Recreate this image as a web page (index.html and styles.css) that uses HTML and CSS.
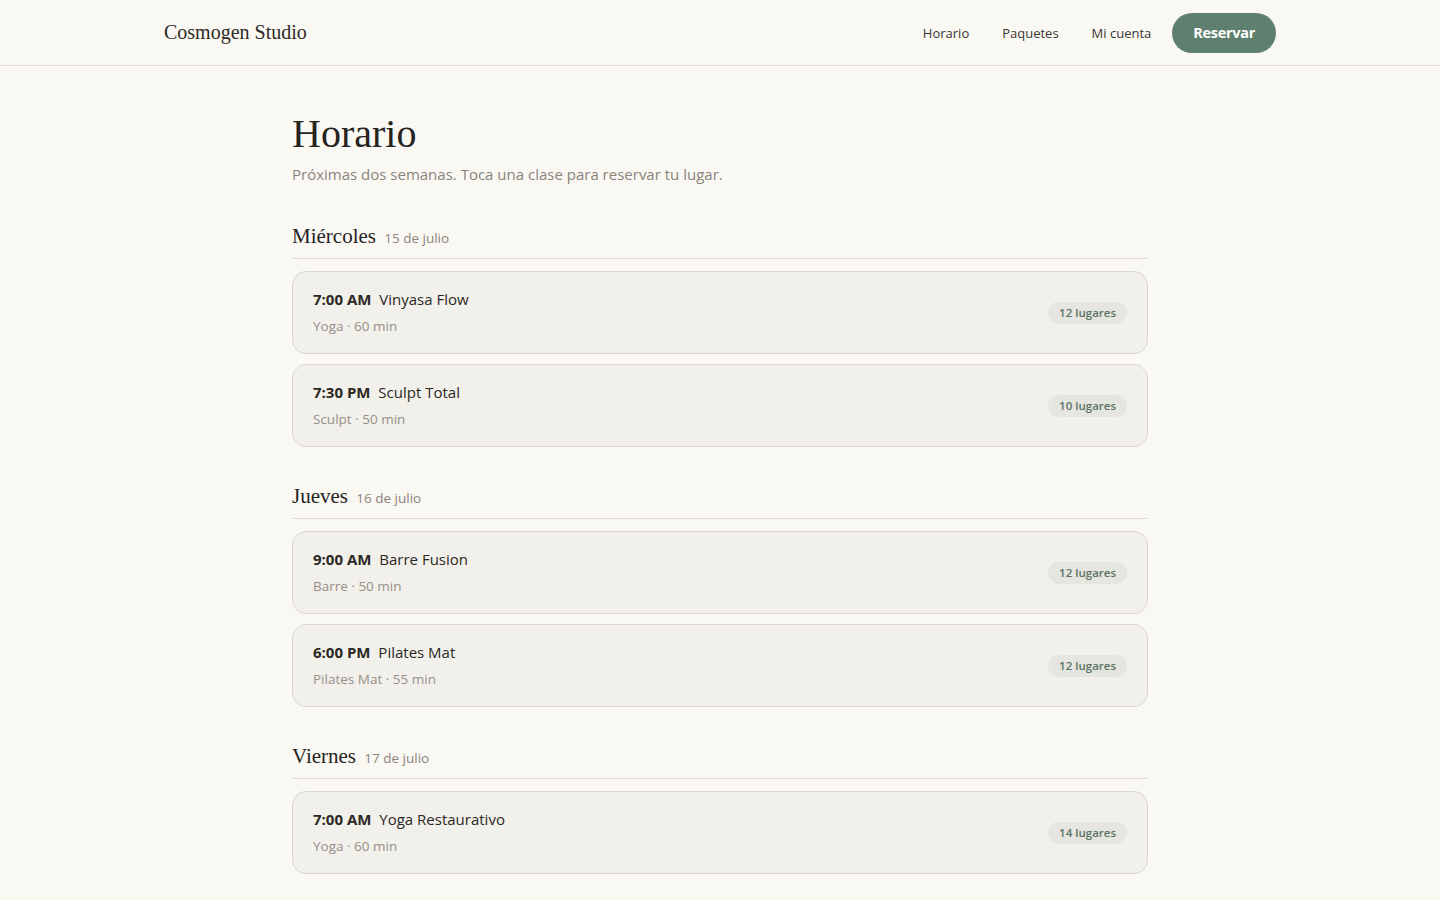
FILE: index.html
```html
<!DOCTYPE html>
<html lang="es">
<head>
  <meta charset="UTF-8">
  <meta name="viewport" content="width=device-width, initial-scale=1.0">
  <title>Horario · Cosmogen Studio</title>
  <link rel="stylesheet" href="styles.css">
</head>
<body>

<header class="topbar">
  <div class="topbar-inner">
    <a class="brand" href="#">Cosmogen Studio</a>
    <nav class="nav">
      <a href="#">Horario</a>
      <a href="#">Paquetes</a>
      <a href="#">Mi cuenta</a>
      <a class="btn-book" href="#">Reservar</a>
    </nav>
  </div>
</header>

<main class="page">
  <h1 class="title">Horario</h1>
  <p class="lead">Próximas dos semanas. Toca una clase para reservar tu lugar.</p>

  <section class="day">
    <h2 class="day-head">Miércoles <span>15 de julio</span></h2>
    <div class="class-card">
      <div>
        <div class="class-name"><b>7:00 AM</b> Vinyasa Flow</div>
        <div class="class-meta">Yoga · 60 min</div>
      </div>
      <span class="spots">12 lugares</span>
    </div>
    <div class="class-card">
      <div>
        <div class="class-name"><b>7:30 PM</b> Sculpt Total</div>
        <div class="class-meta">Sculpt · 50 min</div>
      </div>
      <span class="spots">10 lugares</span>
    </div>
  </section>

  <section class="day">
    <h2 class="day-head">Jueves <span>16 de julio</span></h2>
    <div class="class-card">
      <div>
        <div class="class-name"><b>9:00 AM</b> Barre Fusion</div>
        <div class="class-meta">Barre · 50 min</div>
      </div>
      <span class="spots">12 lugares</span>
    </div>
    <div class="class-card">
      <div>
        <div class="class-name"><b>6:00 PM</b> Pilates Mat</div>
        <div class="class-meta">Pilates Mat · 55 min</div>
      </div>
      <span class="spots">12 lugares</span>
    </div>
  </section>

  <section class="day">
    <h2 class="day-head">Viernes <span>17 de julio</span></h2>
    <div class="class-card">
      <div>
        <div class="class-name"><b>7:00 AM</b> Yoga Restaurativo</div>
        <div class="class-meta">Yoga · 60 min</div>
      </div>
      <span class="spots">14 lugares</span>
    </div>
  </section>
</main>

</body>
</html>
```

FILE: styles.css
```css
body {
  margin: 0;
  background-color: #faf8f3;
  color: #2b2824;
  font-family: "Open Sans", "Noto Sans", sans-serif;
}

a {
  color: inherit;
  text-decoration: none;
}

/* barra superior */
.topbar {
  border-bottom: 1px solid #e2ded7;
}

.topbar-inner {
  max-width: 1112px;
  margin: 0 auto;
  padding: 0 24px;
  height: 65px;
  display: flex;
  align-items: center;
  justify-content: space-between;
}

.brand {
  font-family: "Liberation Serif", "DejaVu Serif", serif;
  font-size: 20px;
  color: #2e2a26;
}

.nav {
  display: flex;
  align-items: center;
  gap: 33px;
  font-size: 13px;
  color: #3a3632;
}

.btn-book {
  margin-left: -12px;
  background-color: #5f806e;
  color: #fff;
  font-weight: 700;
  font-size: 14.5px;
  letter-spacing: -0.3px;
  padding: 10px 21px 11px;
  border-radius: 999px;
}

/* contenido */
.page {
  max-width: 856px;
  margin: 0 auto;
  padding: 46px 0 40px;
}

.title {
  font-family: "Liberation Serif", "DejaVu Serif", serif;
  font-weight: 400;
  font-size: 40px;
  margin: 0;
  line-height: 44px;
  color: #26231f;
}

.lead {
  margin: 8px 0 0;
  font-size: 15px;
  color: #8a847c;
}

.day {
  margin-top: 40px;
}

.day + .day {
  margin-top: 37px;
}

.day-head {
  font-family: "Liberation Serif", "DejaVu Serif", serif;
  font-weight: 400;
  font-size: 21px;
  line-height: 24px;
  margin: 0 0 12px;
  padding-bottom: 8px;
  border-bottom: 1px solid #dedad3;
  color: #26231f;
}

.day-head span {
  font-family: "Open Sans", "Noto Sans", sans-serif;
  font-size: 13.5px;
  color: #8a847c;
  margin-left: 3px;
}

.class-card {
  display: flex;
  align-items: center;
  justify-content: space-between;
  background-color: #f2f0eb;
  border: 1px solid #dbd7cf;
  border-radius: 14px;
  padding: 16px 20px 17px;
  margin-bottom: 10px;
}

.class-name {
  font-size: 15px;
  line-height: 22px;
  color: #2b2824;
}

.class-name b {
  font-weight: 700;
  margin-right: 4px;
}

.class-meta {
  margin-top: 6px;
  font-size: 13.5px;
  line-height: 20px;
  color: #958f87;
}

.spots {
  background-color: #e5e6df;
  color: #5a7264;
  font-size: 11.5px;
  font-weight: 600;
  padding: 3px 11px 4px;
  border-radius: 999px;
  margin-top: 2px;
}
```
